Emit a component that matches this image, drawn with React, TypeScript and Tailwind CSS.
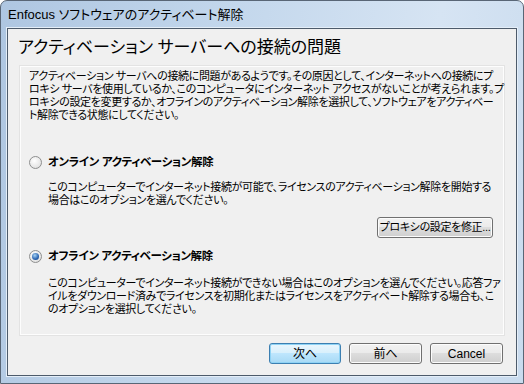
import React from 'react';

const JP = "font-['Liberation_Sans','Noto_Sans_CJK_JP',sans-serif] [font-feature-settings:'palt']";

function Radio({ checked }: { checked?: boolean }) {
  return (
    <span className="relative flex h-[13px] w-[13px] shrink-0 items-center justify-center rounded-full border border-[#8e8f8f] bg-[radial-gradient(circle_at_40%_35%,#ffffff,#e4e4e4_70%,#cfcfcf)]">
      {checked && (
        <span className="h-[7px] w-[7px] rounded-full bg-[radial-gradient(circle_at_40%_35%,#a6d3f5,#2a64b0_60%,#153f7a)]" />
      )}
    </span>
  );
}

function Button({ label, primary, className = '' }: { label: string; primary?: boolean; className?: string }) {
  const look = primary
    ? 'border-[#3c7fb1] bg-[linear-gradient(#eaf6fd_0%,#d9f0fc_45%,#bee6fd_50%,#a7d9f5_100%)] shadow-[inset_0_0_0_1px_#8fd3f5]'
    : 'border-[#707070] bg-[linear-gradient(#f2f2f2_0%,#ebebeb_45%,#dddddd_50%,#cfcfcf_100%)] shadow-[inset_0_0_0_1px_#fcfcfc]';
  return (
    <div className={`flex h-[21px] items-center justify-center whitespace-nowrap rounded-[3px] border text-black ${look} ${className}`}>
      {label}
    </div>
  );
}

export default function App() {
  return (
    <div className={`h-[384px] w-[524px] overflow-hidden bg-white ${JP}`}>
      {/* Window frame */}
      <div className="flex h-full w-full flex-col rounded-t-[7px] border border-[#596676] bg-[linear-gradient(100deg,#aec6e1_0%,#c3d7ec_40%,#d6e4f3_75%,#c9dbee_100%)]">
        {/* Title bar */}
        <div className="flex h-[27px] items-center pl-[7px] text-[13px] text-black">
          Enfocus ソフトウェアのアクティベート解除
        </div>

        {/* Client area */}
        <div className="mx-[6px] mb-[7px] flex flex-1 flex-col border border-[#4d5b6b] bg-[#f0f0f0] shadow-[0_0_0_1px_#e4eef8]">
          <div className="flex h-[37px] items-center pl-[10px] text-[17px] text-black">
            アクティベーション サーバーへの接続の問題
          </div>

          <div className="mx-[12px] flex h-[269px] flex-col border border-[#fdfdfd] shadow-[0_0_0_1px_#e3e3e3] px-[8px] pt-[3px] text-[11px] leading-[13px] tracking-[-0.35px] text-black">
            <p className="whitespace-nowrap">
              アクティベーション サーバへの接続に問題があるようです。その原因として、インターネットへの接続にプ
              <br />
              ロキシ サーバを使用しているか、このコンピュータにインターネット アクセスがないことが考えられます。プ
              <br />
              ロキシの設定を変更するか、オフラインのアクティベーション解除を選択して、ソフトウェアをアクティベー
              <br />
              ト解除できる状態にしてください。
            </p>

            <div className="mt-[34px] flex items-center gap-[6px]">
              <Radio />
              <span className="text-[11.5px] font-bold">オンライン アクティベーション解除</span>
            </div>
            <p className="mt-[12px] whitespace-nowrap pl-[19px]">
              このコンピューターでインターネット接続が可能で、ライセンスのアクティベーション解除を開始する
              <br />
              場合はこのオプションを選んでください。
            </p>
            <div className="mt-[10px] flex justify-end pr-[2px]">
              <Button label="プロキシの設定を修正..." className="h-[20px] w-[116px] text-[11px]" />
            </div>

            <div className="mt-[12px] flex items-center gap-[6px]">
              <Radio checked />
              <span className="text-[11.5px] font-bold">オフライン アクティベーション解除</span>
            </div>
            <p className="mt-[14px] whitespace-nowrap pl-[19px]">
              このコンピューターでインターネット接続ができない場合はこのオプションを選んでください。応答ファ
              <br />
              イルをダウンロード済みでライセンスを初期化またはライセンスをアクティベート解除する場合も、こ
              <br />
              のオプションを選択してください。
            </p>
          </div>

          <div className="mt-[8px] flex justify-end gap-[8px] pr-[13px]">
            <Button label="次へ" primary className="w-[72px] text-[12px]" />
            <Button label="前へ" className="w-[73px] text-[12px]" />
            <Button label="Cancel" className="w-[73px] text-[12px]" />
          </div>
        </div>
      </div>
    </div>
  );
}
